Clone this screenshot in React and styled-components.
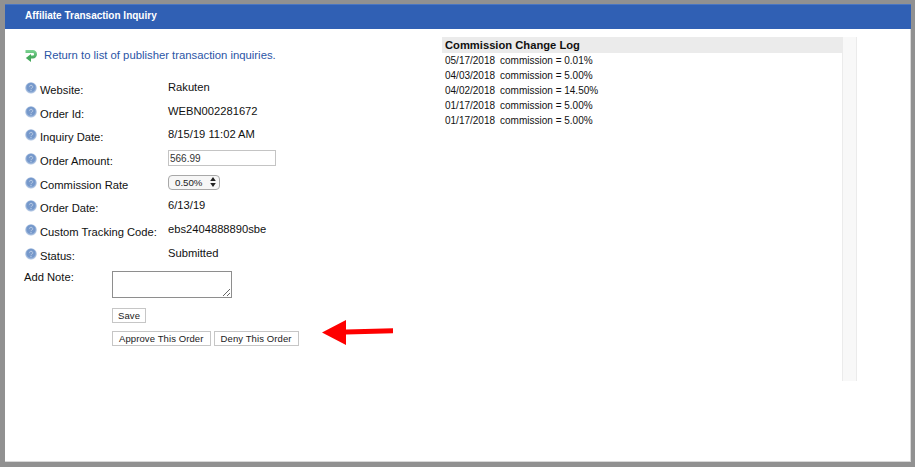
import styled, { createGlobalStyle } from 'styled-components';

const GlobalStyle = createGlobalStyle`
  html, body { margin: 0; padding: 0; background: #919191; }
  body { font-family: "Liberation Sans", Arial, sans-serif; color: #111; }
`

const rows = [
  { label: 'Website:', value: 'Rakuten' },
  { label: 'Order Id:', value: 'WEBN002281672' },
  { label: 'Inquiry Date:', value: '8/15/19 11:02 AM' },
  { label: 'Order Amount:', input: '566.99' },
  { label: 'Commission Rate', select: '0.50%' },
  { label: 'Order Date:', value: '6/13/19' },
  { label: 'Custom Tracking Code:', value: 'ebs2404888890sbe' },
  { label: 'Status:', value: 'Submitted' },
]

const logEntries = [
  { date: '05/17/2018', rate: '0.01%' },
  { date: '04/03/2018', rate: '5.00%' },
  { date: '04/02/2018', rate: '14.50%' },
  { date: '01/17/2018', rate: '5.00%' },
  { date: '01/17/2018', rate: '5.00%' },
]

const HelpIcon = () => (
  <IconSvg width="12" height="12" viewBox="0 0 12 12">
    <defs>
      <radialGradient id="helpBall" cx="50%" cy="45%" r="55%">
        <stop offset="0%" stopColor="#7d9cca" />
        <stop offset="62%" stopColor="#7397cb" />
        <stop offset="100%" stopColor="#cfdcee" />
      </radialGradient>
    </defs>
    <circle cx="6" cy="6" r="5.8" fill="url(#helpBall)" />
    <path d="M4.500 4.700a1.600 1.500 0 1 1 2.300 1.400c-.5.3-.8.600-.8 1.100" fill="none" stroke="#b9cbe4" strokeWidth="1" />
    <circle cx="6" cy="8.700" r=".6" fill="#c9d8ec" />
  </IconSvg>
)

const ReturnIcon = () => (
  <ReturnSvg width="12" height="12" viewBox="0 0 12 12">
    <defs>
      <linearGradient id="returnGreen" x1="0" y1="0" x2="0" y2="1">
        <stop offset="0%" stopColor="#7ed494" />
        <stop offset="100%" stopColor="#45a95c" />
      </linearGradient>
    </defs>
    <path d="M.5 0h7.300a4 4 0 0 1 0 8.400H5.500V5.600h2.300a1.200 1.200 0 0 0 0-2.600H.5z" fill="url(#returnGreen)" />
    <path d="M6 4v8L.8 8z" fill="#45a95c" />
  </ReturnSvg>
)

const ArrowDrawing = () => (
  <svg width="71" height="25" viewBox="0 0 71 25">
    <path d="M0 12.500 24 0v9.500l47-1.200v5L24 14.500V25z" fill="#fe0000" />
  </svg>
)

const StepperIcon = () => (
  <svg width="6" height="10" viewBox="0 0 6 10">
    <path d="M3 0l2.800 4H.2zM3 10L.2 6h5.600z" fill="#222" />
  </svg>
)

const App = () => {
  return (
    <>
      <GlobalStyle />
      <Frame>
        <Header>Affiliate Transaction Inquiry</Header>
        <Body>
          <LeftColumn>
            <ReturnRow>
              <ReturnIcon />
              <ReturnLink href="#">Return to list of publisher transaction inquiries.</ReturnLink>
            </ReturnRow>
            <Fields>
              {rows.map((row) => (
                <FieldRow key={row.label}>
                  <HelpIcon />
                  <Label>{row.label}</Label>
                  {row.value && <Value>{row.value}</Value>}
                  {row.input && <AmountInput defaultValue={row.input} />}
                  {row.select && (
                    <RateSelect>
                      {row.select}
                      <StepperIcon />
                    </RateSelect>
                  )}
                </FieldRow>
              ))}
            </Fields>
            <NoteRow>
              <NoteLabel>Add Note:</NoteLabel>
              <NoteArea />
            </NoteRow>
            <Actions>
              <div>
                <ActionButton $compact>Save</ActionButton>
              </div>
              <ButtonRow>
                <ActionButton>Approve This Order</ActionButton>
                <ActionButton>Deny This Order</ActionButton>
                <ArrowWrap>
                  <ArrowDrawing />
                </ArrowWrap>
              </ButtonRow>
            </Actions>
          </LeftColumn>
          <LogPanel>
            <LogList>
              <LogTitle>Commission Change Log</LogTitle>
              {logEntries.map((entry, i) => (
                <LogEntry key={i}>
                  <span>{entry.date}</span>
                  <span>commission = {entry.rate}</span>
                </LogEntry>
              ))}
            </LogList>
            <LogGutter />
          </LogPanel>
        </Body>
      </Frame>
    </>
  )
}

const Frame = styled.div`
  box-sizing: border-box;
  width: 915px;
  height: 467px;
  padding: 4px 4px 5px 5px;
  display: flex;
  flex-direction: column;
`

const Header = styled.div`
  height: 25px;
  flex: none;
  box-sizing: border-box;
  padding: 4px 0 0 20px;
  background: #3060b4;
  border-top: 1px solid #4a76c2;
  color: #fff;
  font-size: 10px;
  font-weight: bold;
  line-height: 13px;
`

const Body = styled.div`
  flex: 1;
  background: #fff;
  border-right: 1px solid #d8d8d8;
  border-bottom: 1px solid #d8d8d8;
  display: flex;
  padding: 8px 0 0 20px;
`

const LeftColumn = styled.div`
  width: 417px;
  flex: none;
`

const ReturnRow = styled.div`
  display: flex;
  align-items: center;
  gap: 7px;
  height: 18px;
  margin-top: 9px;
`

const ReturnSvg = styled.svg`
  flex: none;
  margin-top: 2px;
`

const ReturnLink = styled.a`
  color: #2b55a6;
  font-size: 11.3px;
  text-decoration: none;
`

const Fields = styled.div`
  margin-top: 15px;
`

const FieldRow = styled.div`
  display: flex;
  align-items: flex-start;
  height: 23.7px;
`

const IconSvg = styled.svg`
  flex: none;
  margin-top: 3px;
`

const Label = styled.div`
  width: 128px;
  margin-left: 3px;
  flex: none;
  font-size: 11.2px;
  line-height: 14px;
  padding-top: 4px;
  white-space: nowrap;
`

const Value = styled.div`
  font-size: 11.2px;
  line-height: 14px;
  padding-top: 1px;
  white-space: nowrap;
`

const AmountInput = styled.input`
  box-sizing: border-box;
  width: 108px;
  height: 16px;
  margin: 0;
  padding: 0 1px;
  border: 1px solid #c4c4c4;
  font: 10px "Liberation Sans", Arial, sans-serif;
  color: #333;
`

const RateSelect = styled.div`
  box-sizing: border-box;
  width: 52px;
  height: 15px;
  margin-top: 1px;
  padding: 0 3px 0 6px;
  display: flex;
  align-items: center;
  justify-content: space-between;
  border: 1px solid #a8a8a8;
  border-radius: 4px;
  background: #f6f6f6;
  font-size: 9.7px;
  color: #222;
`

const NoteRow = styled.div`
  display: flex;
  margin-top: 1px;
`

const NoteLabel = styled.div`
  width: 88px;
  margin-left: -1px;
  font-size: 11.2px;
  line-height: 14px;
`

const NoteArea = styled.textarea`
  box-sizing: border-box;
  width: 120px;
  height: 27px;
  margin: 1px 0 0;
  padding: 0;
  border: 1px solid #8e8e8e;
  background: #fff;
`

const Actions = styled.div`
  margin: 7px 0 0 87px;
  display: flex;
  flex-direction: column;
  gap: 8px;
`

const ButtonRow = styled.div`
  display: flex;
  gap: 3px;
  position: relative;
`

const ActionButton = styled.button`
  box-sizing: border-box;
  height: 15px;
  padding: 0 ${(props) => (props.$compact ? '5px' : '6px')};
  background: #fff;
  border: 1px solid #c6c6c6;
  color: #222;
  font: 9.500px "Liberation Sans", Arial, sans-serif;
  letter-spacing: 0.1px;
  line-height: 13px;
`

const ArrowWrap = styled.div`
  position: absolute;
  left: 210px;
  top: -11px;
  line-height: 0;
`

const LogPanel = styled.div`
  display: flex;
  width: 415px;
  height: 344px;
  flex: none;
`

const LogList = styled.div`
  width: 400px;
  flex: none;
`

const LogTitle = styled.div`
  height: 16px;
  padding-left: 3px;
  background: #ebebeb;
  font-size: 11.2px;
  font-weight: bold;
  line-height: 16px;
  color: #111;
`

const LogEntry = styled.div`
  display: flex;
  gap: 5px;
  height: 15px;
  padding-left: 3px;
  font-size: 10px;
  line-height: 15px;
`

const LogGutter = styled.div`
  width: 15px;
  box-sizing: border-box;
  background: #f8f8f8;
  border-left: 1px solid #ebebeb;
  border-right: 1px solid #ebebeb;
`

export default App
